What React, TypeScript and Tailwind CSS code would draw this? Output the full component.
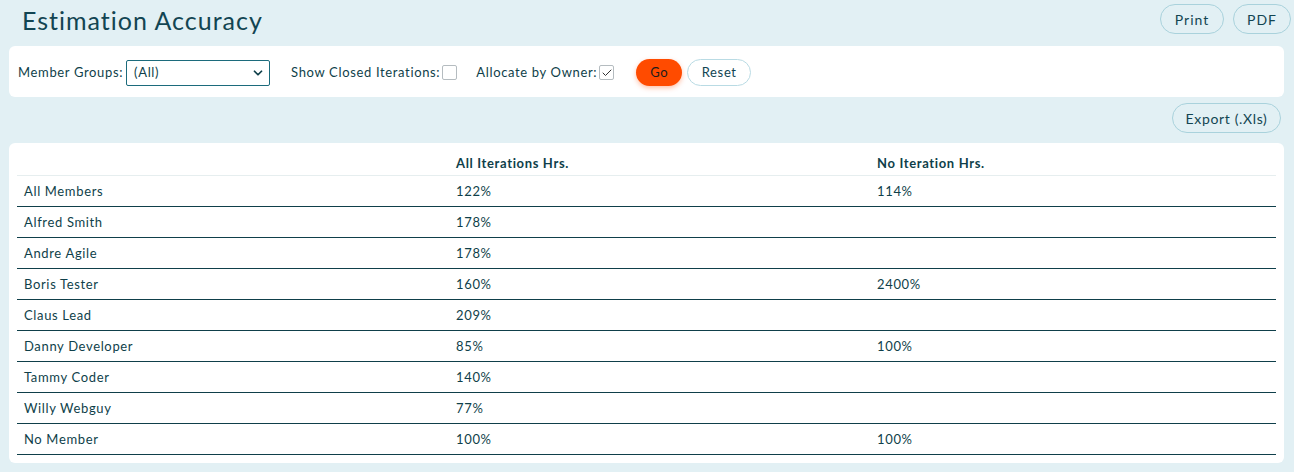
import { ChevronDown, Check } from "lucide-react";

const rows = [
  { name: "All Members", all: "122%", none: "114%" },
  { name: "Alfred Smith", all: "178%", none: "" },
  { name: "Andre Agile", all: "178%", none: "" },
  { name: "Boris Tester", all: "160%", none: "2400%" },
  { name: "Claus Lead", all: "209%", none: "" },
  { name: "Danny Developer", all: "85%", none: "100%" },
  { name: "Tammy Coder", all: "140%", none: "" },
  { name: "Willy Webguy", all: "77%", none: "" },
  { name: "No Member", all: "100%", none: "100%" },
];

export default function App() {
  return (
    <div
      className="w-[1294px] h-[472px] bg-[#e2f0f4] text-[#0f3f4a] text-[13px] tracking-[0.65px] overflow-hidden"
      style={{ fontFamily: "Lato, 'Open Sans', sans-serif" }}
    >
      {/* Header */}
      <div className="flex items-start justify-between h-[46px] pl-[22px] pr-[3px]">
        <h1 className="text-[25px] leading-none pt-[8px] tracking-[1px] text-[#124552]">Estimation Accuracy</h1>
        <div className="flex gap-[9px] pt-[4px]">
          <button className="h-[30px] w-[64px] rounded-full border border-[#a9d2dc] text-[14px] tracking-[1px] text-[#124552]">
            Print
          </button>
          <button className="h-[30px] w-[58px] rounded-full border border-[#a9d2dc] text-[14px] tracking-[1px] text-[#124552]">
            PDF
          </button>
        </div>
      </div>

      {/* Filters */}
      <div className="mx-[9px] mr-[10px] h-[51px] bg-white rounded-md flex items-center pl-[9px] pt-[2px]">
        <span>Member Groups:</span>
        <div className="ml-[3px] w-[144px] h-[26px] border border-[#1c6b7c] rounded-[2px] flex items-center justify-between pl-[7px] pr-[4px]">
          <span>(All)</span>
          <ChevronDown className="w-[14px] h-[14px]" strokeWidth={3} />
        </div>
        <span className="ml-[21px]">Show Closed Iterations:</span>
        <span className="ml-[2px] w-[15px] h-[15px] border border-[#b5bcc0] rounded-[2px]" />
        <span className="ml-[19px]">Allocate by Owner:</span>
        <span className="ml-[2px] w-[15px] h-[15px] border border-[#b5bcc0] rounded-[2px] flex items-center justify-center">
          <Check className="w-[12px] h-[12px] text-[#333]" strokeWidth={2} />
        </span>
        <button className="ml-[22px] w-[46px] h-[27px] rounded-full bg-[#ff4b00] text-[#1c1c1c] shadow-[0_2px_5px_rgba(255,75,0,0.35)]">
          Go
        </button>
        <button className="ml-[5px] w-[64px] h-[27px] rounded-full border border-[#b9dbe4] text-[#124552]">
          Reset
        </button>
      </div>

      {/* Export */}
      <div className="flex justify-end pr-[13px] pt-[6px] h-[46px]">
        <button className="h-[30px] w-[109px] rounded-full border border-[#a9d2dc] text-[14px] text-[#124552]">
          Export (.Xls)
        </button>
      </div>

      {/* Table */}
      <div className="mx-[9px] mr-[10px] bg-white rounded-md px-[8px] pt-[9px] pb-[8px]">
        <div className="grid grid-cols-[432px_421px_1fr] h-[24px] items-center border-b border-[#e6eeef] font-bold">
          <span />
          <span className="pl-[7px]">All Iterations Hrs.</span>
          <span className="pl-[7px]">No Iteration Hrs.</span>
        </div>
        {rows.map((r) => (
          <div
            key={r.name}
            className="grid grid-cols-[432px_421px_1fr] h-[31px] items-center pt-[2px] border-b border-[#0f3f4a]"
          >
            <span className="pl-[7px]">{r.name}</span>
            <span className="pl-[7px]">{r.all}</span>
            <span className="pl-[7px]">{r.none}</span>
          </div>
        ))}
      </div>
    </div>
  );
}
